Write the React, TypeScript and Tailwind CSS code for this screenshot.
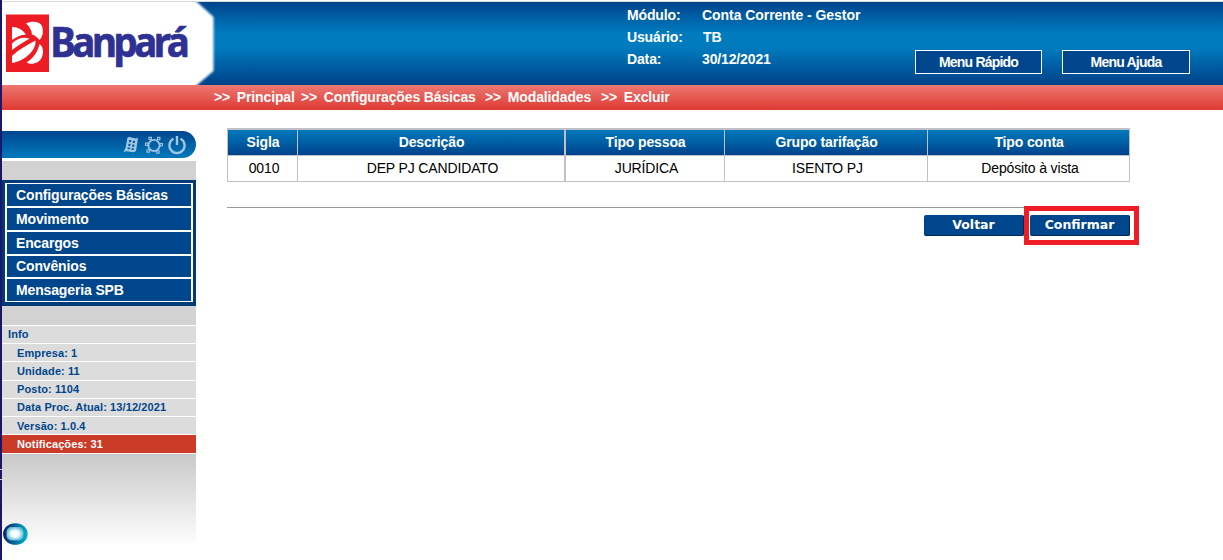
import React from "react";

const menu = [
  { label: "Configurações Básicas", height: "h-[22px]" },
  { label: "Movimento", height: "h-[22px]" },
  { label: "Encargos", height: "h-[22px]" },
  { label: "Convênios", height: "h-[21px]" },
  { label: "Mensageria SPB", height: "h-[22px]" },
];

const info = [
  { label: "Empresa: 1", height: "h-[17px] pt-px" },
  { label: "Unidade: 11", height: "h-[18px]" },
  { label: "Posto: 1104", height: "h-[17px]" },
  { label: "Data Proc. Atual: 13/12/2021", height: "h-[17px]" },
  { label: "Versão: 1.0.4", height: "h-[17px] pt-px" },
];

const columns = [
  { title: "Sigla", value: "0010" },
  { title: "Descrição", value: "DEP PJ CANDIDATO" },
  { title: "Tipo pessoa", value: "JURÍDICA" },
  { title: "Grupo tarifação", value: "ISENTO PJ" },
  { title: "Tipo conta", value: "Depósito à vista" },
];

function Logo() {
  return (
    <svg width="216" height="83" viewBox="2 2 216 83" className="block shrink-0">
      <defs>
        <filter id="soft" x="-10%" y="-10%" width="120%" height="120%">
          <feGaussianBlur stdDeviation="0.8" />
        </filter>
      </defs>
      <path d="M-10-10H182L197 2L213.500 17V71L197 85L182 97H-10Z" fill="#fff" filter="url(#soft)" />
      <rect x="6" y="14.500" width="43" height="57.500" fill="#ed1c24" />
      <g fill="#fff">
        <path d="M12 27C18 27 23 30 26 34.500C21 34.500 16 37 12 40Z" />
        <path d="M26 23.500C31 21 38 21 41.500 25C44 30 43 37 39.500 40C37 37 35 35.500 32 34.500C31.500 30 29.500 26.500 26 23.500Z" />
        <path d="M12 43.500C17 38 24 36.500 29.500 38.500C24 42 17 46 12 50Z" />
        <path d="M12 63V56C18 50 26 45.500 35.500 40.500C36.500 50 25 61 12 63Z" />
        <path d="M26.500 62.500C34 58 38 51 39.500 44C43 46 44 52 42 57C39 64 31 65 26.500 62.500Z" />
      </g>
      <text
        x="0"
        y="0"
        transform="translate(50.300 56.500) scale(0.937 1)"
        fill="#2e3192"
        stroke="#2e3192"
        strokeWidth="0.7"
        fontFamily="'Noto Sans', 'Open Sans', sans-serif"
        fontWeight="700"
        fontSize="41"
        letterSpacing="-3.700"
      >
        Banpará
      </text>
    </svg>
  );
}

function ToolIcons() {
  return (
    <svg width="66" height="24" viewBox="0 0 66 24" fill="none" stroke="#9fc6e2" className="block">
      <path d="M4.500 3.500C8 2 10 5.500 15 4L13 17C9 20.500 6 15.500 0.500 18L2.500 14Z" fill="#9fc6e2" stroke="none" />
      <g fill="#0b5fa5" stroke="none">
        <rect x="6" y="6" width="2.200" height="2.200" />
        <rect x="9.800" y="6.800" width="2.200" height="2.200" />
        <rect x="5.300" y="9.800" width="2.200" height="2.200" />
        <rect x="9.200" y="10.600" width="2.200" height="2.200" />
        <rect x="4.700" y="13.400" width="2.200" height="1.800" />
        <rect x="8.500" y="14.200" width="2.200" height="1.800" />
      </g>
      <circle cx="31" cy="11.500" r="5.600" strokeWidth="1.800" />
      <g strokeWidth="1.100" fill="#0b5fa5">
        <rect x="26" y="3.300" width="2.400" height="2.400" />
        <rect x="34.500" y="3.300" width="2.400" height="2.400" />
        <rect x="22.500" y="9" width="2.400" height="2.400" />
        <rect x="37" y="9.500" width="2.400" height="2.400" />
        <rect x="24" y="15.800" width="2.400" height="2.400" />
        <rect x="33.700" y="16.800" width="2.400" height="2.400" />
      </g>
      <path d="M50.500 4.700A7.600 7.600 0 1 0 57.500 4.700" strokeWidth="2.300" />
      <path d="M54 2V11" strokeWidth="2.400" />
    </svg>
  );
}

function Orb() {
  return (
    <svg width="26" height="24" viewBox="0 0 26 24" className="absolute bottom-[-2px] left-0">
      <defs>
        <linearGradient id="rim" x1="0" y1="0.400" x2="1" y2="0.500">
          <stop offset="0" stopColor="#101c66" />
          <stop offset="0.450" stopColor="#076394" />
          <stop offset="1" stopColor="#00b4d0" />
        </linearGradient>
        <radialGradient id="glow">
          <stop offset="0" stopColor="#fff" />
          <stop offset="0.450" stopColor="#f4fcff" />
          <stop offset="0.750" stopColor="#a5dbe8" />
          <stop offset="1" stopColor="#62bcd6" />
        </radialGradient>
      </defs>
      <ellipse cx="13.400" cy="12" rx="12.300" ry="10.800" fill="url(#rim)" />
      <rect x="4.500" y="5" width="17" height="13.500" rx="5" fill="url(#glow)" />
    </svg>
  );
}

export default function App() {
  return (
    <div className="flex h-[560px] w-[1223px] overflow-hidden bg-white font-['Liberation_Sans',Arial,sans-serif] text-[14px] tracking-[-0.14px]">
      <div className="flex w-[2px] shrink-0 flex-col justify-end bg-[#19166b]">
        <div className="mb-[80px] h-[11px] border-y border-[#c9cce0]" />
      </div>
      <div className="flex min-w-0 flex-1 flex-col">
        <div className="mt-px h-px shrink-0 bg-[#d9d9d9]" />
        <header className="flex h-[83px] shrink-0 bg-[linear-gradient(to_bottom,#00438b_0%,#007bbe_37%,#007bbe_55%,#00438b_98%)] font-bold text-white">
          <Logo />
          <div className="ml-[409px] grid h-[65px] w-[288px] grid-cols-[75px_1fr] grid-rows-[22px_22px_21px] items-center pt-[2px] leading-[16px]">
            <span>Módulo:</span>
            <span className="tracking-[-0.05px]">Conta Corrente - Gestor</span>
            <span>Usuário:</span>
            <span className="pl-px">TB</span>
            <span>Data:</span>
            <span>30/12/2021</span>
          </div>
          <div className="mt-[48px] flex gap-[20px] text-[14px] tracking-[-0.8px]">
            <button className="h-[24px] w-[127px] border border-white bg-[#00468c]">Menu Rápido</button>
            <button className="h-[24px] w-[128px] border border-white bg-[#00468c]">Menu Ajuda</button>
          </div>
        </header>
        <nav className="flex h-[25px] shrink-0 items-center whitespace-pre bg-[linear-gradient(to_bottom,#ec7772,#df3a32)] pl-[212px] font-bold text-white">
          <span className="w-[87px]">{">>"} <span className="ml-[3px]">Principal</span></span>
          <span className="w-[184px]">{">>"} <span className="ml-[3px]">Configurações Básicas</span></span>
          <span className="w-[116px]">{">>"} <span className="ml-[3px]">Modalidades</span></span>
          <span>{">>"} <span className="ml-[3px]">Excluir</span></span>
        </nav>
        <div className="flex flex-1">
          <aside className="flex w-[194px] shrink-0 flex-col pt-[21px]">
            <div className="flex h-[27px] justify-end rounded-r-[14px] bg-[linear-gradient(to_bottom,#00468e,#0079bc)] pr-[7px] pt-[3px]">
              <ToolIcons />
            </div>
            <div className="mt-[3px] h-[19px] bg-[#d2d2d2]" />
            <div className="h-[126px] bg-[#003b75] px-[3px] pt-[3px]">
              <div className="flex flex-col gap-[2px] border-x-2 border-y border-white bg-white">
                {menu.map((m) => (
                  <div key={m.label} className={`${m.height} flex items-center bg-[#00468c] pl-[9px] font-bold text-white`}>
                    {m.label}
                  </div>
                ))}
              </div>
            </div>
            <div className="h-[19px] bg-[#d2d2d2]" />
            <div className="flex flex-col gap-px bg-white pt-px text-[11px] font-bold tracking-[0.1px] text-[#00468c]">
              <div className="flex h-[17px] items-center bg-[#dcdcdc] pl-[6px]">Info</div>
              {info.map((i) => (
                <div key={i.label} className={`${i.height} flex items-center bg-[#dcdcdc] pl-[15px]`}>
                  {i.label}
                </div>
              ))}
              <div className="flex h-[18px] items-center bg-[#ca3b28] pl-[15px] text-white">Notificações: 31</div>
            </div>
            <div className="relative mt-px h-[90px] bg-[linear-gradient(to_bottom,#c9c9c9,#fdfdfd)]">
              <Orb />
            </div>
          </aside>
          <main className="ml-[31px] w-[912px] pt-[18px]">
            <div className="w-[903px] bg-[#c0c0c8] px-px pb-px pt-[2px]">
              <div className="grid grid-cols-[69px_266px_159px_202px_201px] grid-rows-[25px_25px] gap-px">
                {columns.map((c, i) => (
                  <div
                    key={c.title}
                    className={`flex items-center justify-center bg-[linear-gradient(to_bottom,#0079bc,#00438b)] pl-px font-bold text-white ${i === 2 ? "ml-px" : ""}`}
                  >
                    {c.title}
                  </div>
                ))}
                {columns.map((c, i) => (
                  <div key={c.value} className={`flex items-center justify-center bg-white pl-[3px] text-black ${i === 2 ? "ml-px" : ""}`}>
                    {c.value}
                  </div>
                ))}
              </div>
            </div>
            <div className="mt-[25px] h-px w-[903px] bg-[#999]" />
            <div className="-mt-[2px] flex items-center justify-end font-['DejaVu_Sans',Verdana,sans-serif] text-[12.5px] font-bold tracking-normal text-white">
              <button className="h-[21px] w-[100px] rounded-[2px] border-b border-r border-[#00285c] bg-[#00468c]">Voltar</button>
              <div className="flex h-[39px] w-[115px] items-center border-[5px] border-[#ee1c25] pl-px">
                <button className="h-[21px] w-[100px] rounded-[2px] border-b border-r border-[#00285c] bg-[#00468c]">Confirmar</button>
              </div>
            </div>
          </main>
        </div>
      </div>
    </div>
  );
}
